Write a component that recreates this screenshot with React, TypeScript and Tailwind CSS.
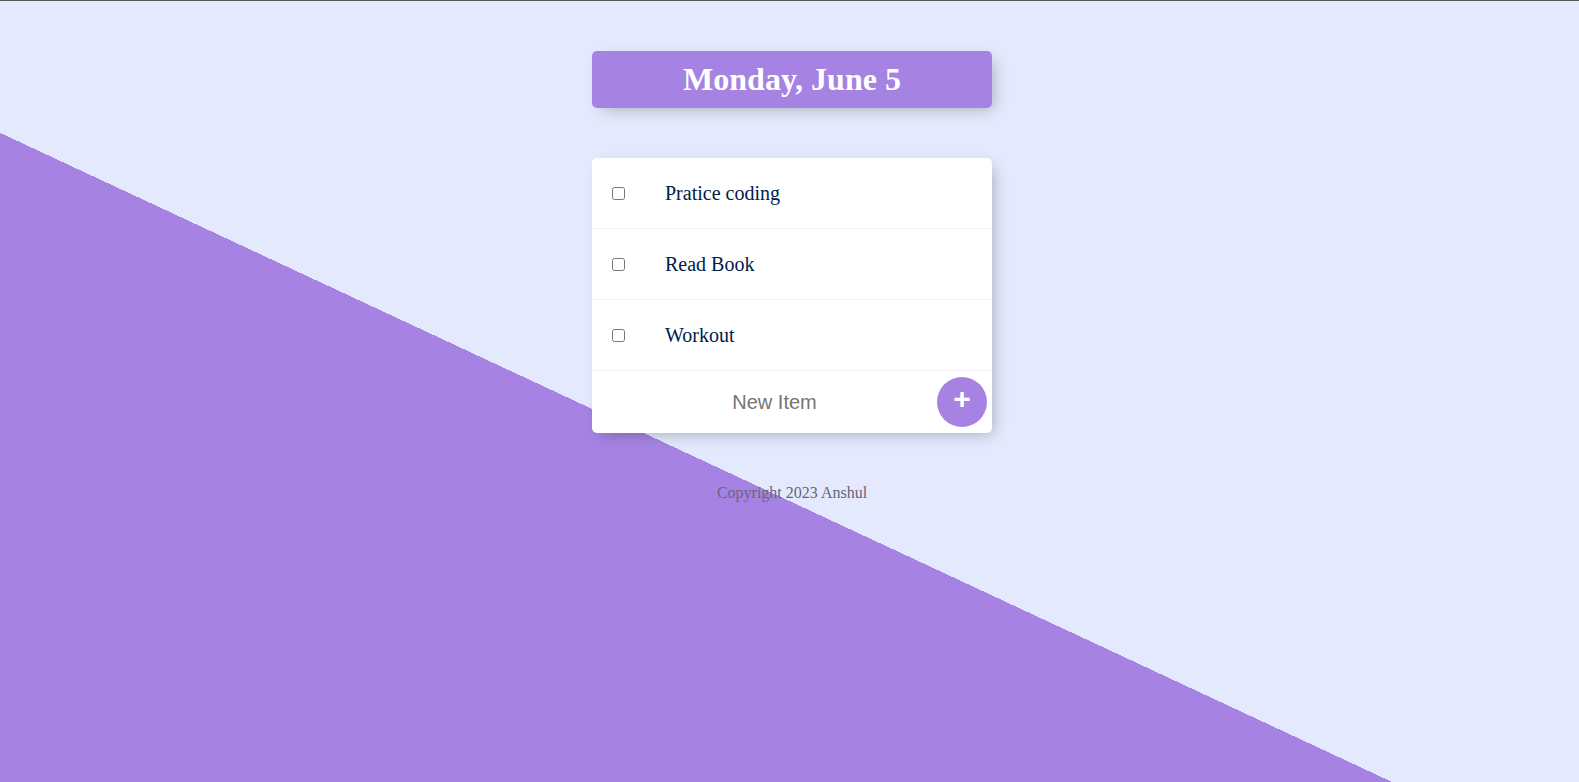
export default function App() {
  const items = ["Pratice coding", "Read Book", "Workout"];

  return (
    <div className="h-screen overflow-hidden border-t border-[#555555] bg-[#E4E9FD]">
      <div className="min-h-[1000px] pl-[5px] pt-[50px] bg-[linear-gradient(25deg,#A683E3_50%,#E4E9FD_50%)] font-['Liberation_Serif',serif]">
        {/* Date heading */}
        <div className="max-w-[400px] mx-auto rounded-[5px] bg-[#A683E3] text-center shadow-[5px_5px_15px_-5px_rgba(0,0,0,0.3)]">
          <h1 className="p-[10px] text-[32px] leading-[37px] font-bold text-white">
            Monday, June 5
          </h1>
        </div>

        {/* Todo list */}
        <div className="max-w-[400px] mx-auto mt-[50px] rounded-[5px] bg-white shadow-[5px_5px_15px_-5px_rgba(0,0,0,0.3)]">
          {items.map((item) => (
            <div
              key={item}
              className="flex items-center min-h-[71px] border-b border-[#F1F1F1]"
            >
              <input type="checkbox" className="m-[20px] w-[13px] h-[13px]" />
              <p className="p-[20px] text-[20px] leading-[23px] text-[#00204a]">
                {item}
              </p>
            </div>
          ))}

          <form
            className="flex items-center h-[62px] ml-[20px] pr-[4px]"
            onSubmit={(e) => e.preventDefault()}
          >
            <input
              type="text"
              placeholder="New Item"
              className="w-[325px] h-[60px] text-center text-[20px] outline-none font-['Liberation_Sans',sans-serif] placeholder:text-[#757575]"
            />
            <button
              type="submit"
              className="w-[50px] h-[50px] rounded-full bg-[#A683E3] text-white text-[30px] font-bold leading-none pb-[6px] font-['Liberation_Sans',sans-serif]"
            >
              +
            </button>
          </form>
        </div>

        <footer className="mt-[51px] text-center text-[16px] leading-[18px] text-[#66667a]">
          Copyright 2023 Anshul
        </footer>
      </div>
    </div>
  );
}
